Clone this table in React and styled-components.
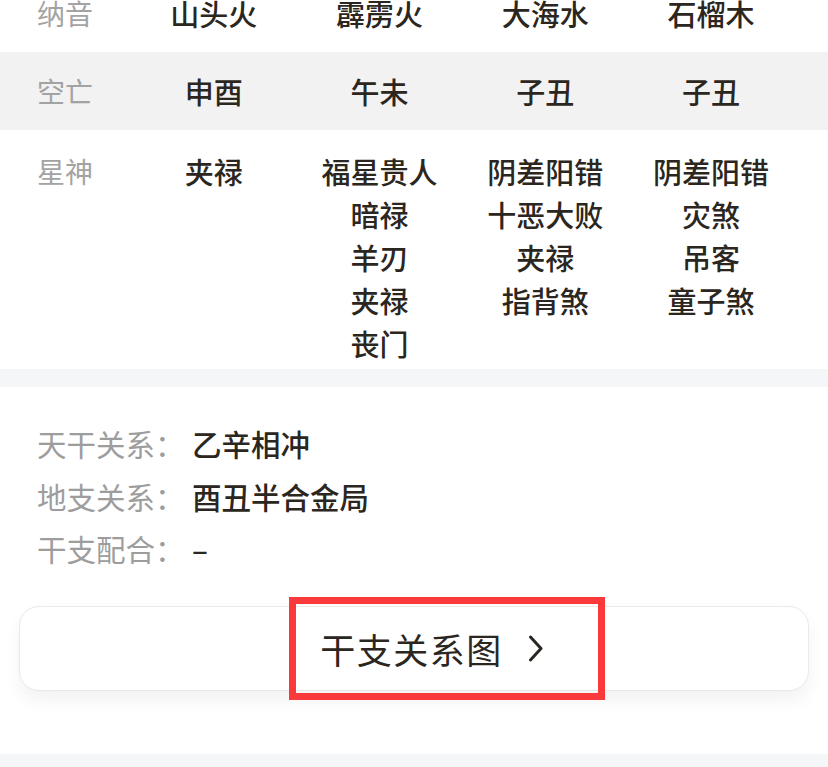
import React from "react";
import styled, { createGlobalStyle } from "styled-components";

const Global = createGlobalStyle`
  html, body { margin: 0; padding: 0; background: #ffffff; }
  body {
    font-family: "Noto Sans CJK SC", "Noto Sans", sans-serif;
    overflow: hidden;
  }
`;

const Page = styled.div`
  width: 828px;
  height: 767px;
  overflow: hidden;
  background: #ffffff;
  position: relative;
`;

const Table = styled.div`
  margin-top: -26px;
`;

const Row = styled.div`
  display: grid;
  grid-template-columns: 94px repeat(4, 1fr);
  padding: ${(p) => (p.$tall ? "20px 34px 4px 37px" : "0 34px 0 37px")};
  background: ${(p) => (p.$shaded ? "#f2f2f2" : "#ffffff")};
  min-height: ${(p) => (p.$tall ? "auto" : "78px")};
  align-items: ${(p) => (p.$tall ? "start" : "center")};
`;

const Label = styled.div`
  font-size: 28px;
  line-height: 43px;
  color: #a3a3a3;
  font-weight: 400;
  white-space: nowrap;
`;

const Cell = styled.div`
  display: flex;
  flex-direction: column;
  align-items: center;
  font-size: 29px;
  line-height: 43px;
  font-weight: 500;
  color: #2b2620;
  white-space: nowrap;
`;

const Divider = styled.div`
  height: 18px;
  background: #f5f6f8;
`;

const Relations = styled.div`
  padding: 30px 0 0 37px;
  display: flex;
  flex-direction: column;
`;

const RelLine = styled.div`
  display: flex;
  font-size: 29.5px;
  line-height: 52.5px;
  white-space: nowrap;
`;

const RelKey = styled.span`
  color: #9d9d9d;
  width: 155px;
`;

const RelVal = styled.span`
  color: #2b2620;
  font-weight: 500;
`;

const ButtonWrap = styled.div`
  padding: 31px 19px 63px 19px;
`;

const LinkButton = styled.div`
  position: relative;
  height: 85px;
  box-sizing: border-box;
  border: 1.5px solid #e9e9e9;
  border-radius: 20px;
  background: #ffffff;
  box-shadow: 0 10px 18px rgba(0, 0, 0, 0.05);
  display: flex;
  align-items: center;
  justify-content: center;
  gap: 25px;
  padding-left: 36px;
  font-size: 35px;
  color: #2b2620;
  letter-spacing: 1.5px;
`;

const Highlight = styled.div`
  position: absolute;
  left: 269px;
  top: -10px;
  width: 316px;
  height: 103px;
  box-sizing: border-box;
  border: 7px solid #fa3a3a;
  pointer-events: none;
`;

const BottomBand = styled.div`
  height: 20px;
  background: #f5f6f8;
`;

const Chevron = () => (
  <svg width="16" height="27" viewBox="0 0 16 27" fill="none">
    <path d="M2.5 2 L13 13.5 L2.5 25" stroke="#2b2620" strokeWidth="3" strokeLinecap="round" strokeLinejoin="round" />
  </svg>
);

const rows = [
  { label: "纳音", cells: [["山头火"], ["霹雳火"], ["大海水"], ["石榴木"]] },
  { label: "空亡", shaded: true, cells: [["申酉"], ["午未"], ["子丑"], ["子丑"]] },
  {
    label: "星神",
    tall: true,
    cells: [
      ["夹禄"],
      ["福星贵人", "暗禄", "羊刃", "夹禄", "丧门"],
      ["阴差阳错", "十恶大败", "夹禄", "指背煞"],
      ["阴差阳错", "灾煞", "吊客", "童子煞"],
    ],
  },
];

const relations = [
  ["天干关系：", "乙辛相冲"],
  ["地支关系：", "酉丑半合金局"],
  ["干支配合：", "–"],
];

export default function App() {
  return (
    <Page>
      <Global />
      <Table>
        {rows.map((r) => (
          <Row key={r.label} $shaded={r.shaded} $tall={r.tall}>
            <Label>{r.label}</Label>
            {r.cells.map((c, i) => (
              <Cell key={i}>
                {c.map((t, j) => (
                  <span key={j}>{t}</span>
                ))}
              </Cell>
            ))}
          </Row>
        ))}
      </Table>
      <Divider />
      <Relations>
        {relations.map(([k, v]) => (
          <RelLine key={k}>
            <RelKey>{k}</RelKey>
            <RelVal>{v}</RelVal>
          </RelLine>
        ))}
      </Relations>
      <ButtonWrap>
        <LinkButton>
          <span>干支关系图</span>
          <Chevron />
          <Highlight />
        </LinkButton>
      </ButtonWrap>
      <BottomBand />
    </Page>
  );
}
